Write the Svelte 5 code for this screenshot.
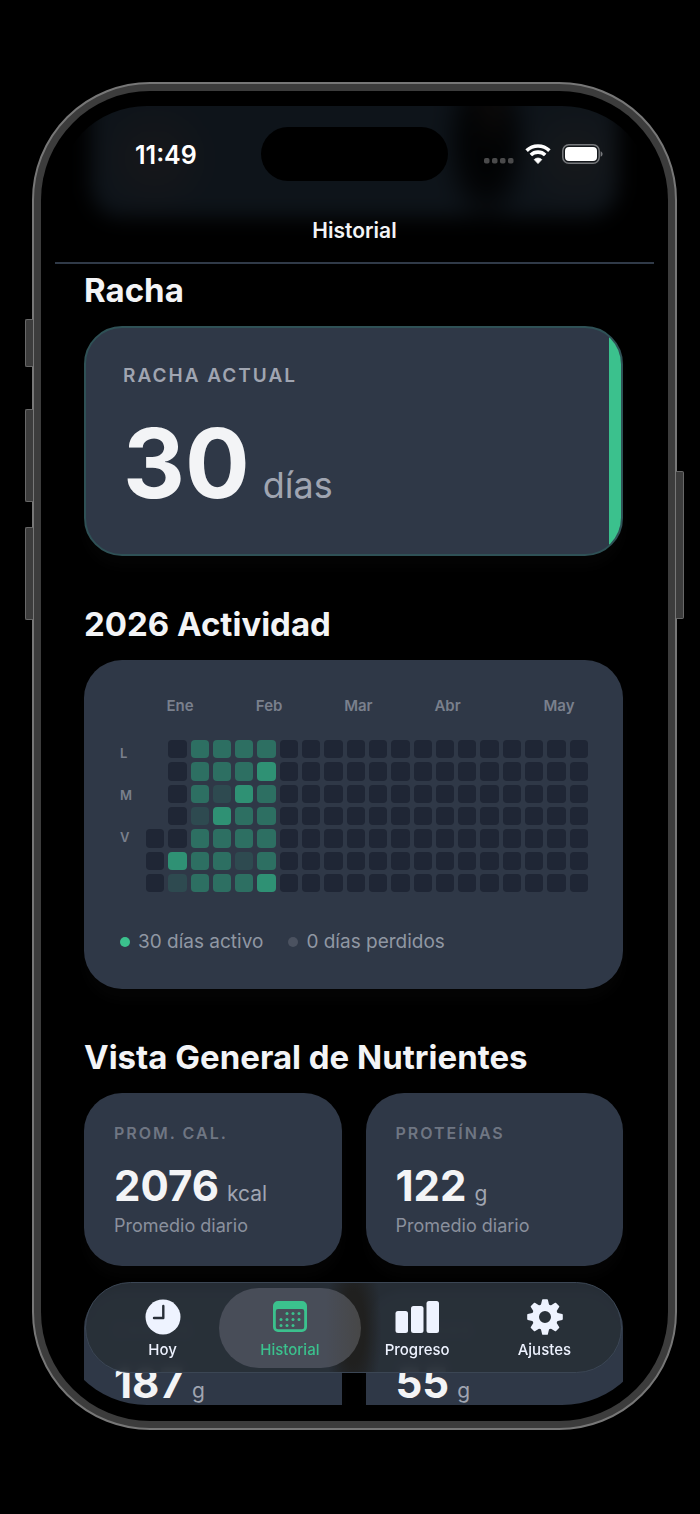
<script>
  const months = [
    { name: 'Ene', column: 1 },
    { name: 'Feb', column: 5 },
    { name: 'Mar', column: 9 },
    { name: 'Abr', column: 13 },
    { name: 'May', column: 18 }
  ];

  // One string per week, Monday to Sunday: - outside the year, 0 empty, 1 to 3 activity level
  const recorded = ['----000', '0000031', '2221222', '2213222', '2232212', '2322223'];
  const weeks = [...recorded, ...Array(14).fill('0000000')];
  const days = weeks.flatMap((week) => week.split(''));

  const nutrients = [
    { label: 'PROM. CAL.', value: '2076', unit: 'kcal' },
    { label: 'PROTEÍNAS', value: '122', unit: 'g' },
    { label: 'CARBOS', value: '187', unit: 'g' },
    { label: 'GRASAS', value: '55', unit: 'g' }
  ];

  const teeth = [0, 45, 90, 135, 180, 225, 270, 315];
  const dots = [
    [14, 12], [20, 12], [26, 12],
    [8, 18], [14, 18], [20, 18], [26, 18],
    [8, 24], [14, 24], [20, 24]
  ];

  const tabs = ['Hoy', 'Historial', 'Progreso', 'Ajustes'];
  let active = $state('Historial');
</script>

<div class="stage">
  <div class="phone">
    <span class="key key-action"></span>
    <span class="key key-up"></span>
    <span class="key key-down"></span>
    <span class="key key-power"></span>
    <div class="bezel">
      <div class="screen">
        <div class="status">
          <span class="time">11:49</span>
          <span class="island"></span>
          <span class="signals">
            <svg width="30" height="24" viewBox="0 0 30 24" fill="#4a4a4b" aria-hidden="true">
              <rect x="0" y="16" width="5.5" height="5.5" rx="1.8" />
              <rect x="8" y="16" width="5.5" height="5.5" rx="1.8" />
              <rect x="16" y="16" width="5.5" height="5.5" rx="1.8" />
              <rect x="24" y="16" width="5.5" height="5.5" rx="1.8" />
            </svg>
            <svg width="26" height="24" viewBox="0 0 26 24" aria-hidden="true">
              <g fill="none" stroke="#fff" stroke-width="3.6">
                <path d="M1.6 8.6a16.4 16.4 0 0 1 22.8 0" />
                <path d="M5.8 13a10.4 10.4 0 0 1 14.4 0" />
              </g>
              <path d="M13 21.6 9.2 17.6a5.4 5.4 0 0 1 7.6 0Z" fill="#fff" stroke="#fff" stroke-width=".8" stroke-linejoin="round" />
            </svg>
            <svg width="41" height="24" viewBox="0 0 41 24" aria-hidden="true">
              <rect x=".8" y="2.8" width="36.4" height="18.4" rx="6" fill="none" stroke="#77797c" stroke-width="1.5" />
              <rect x="3" y="5" width="32" height="14" rx="4" fill="#fff" />
              <path d="M38.6 9.2c2.6 1 2.6 4.600 0 5.600Z" fill="#77797c" />
            </svg>
          </span>
        </div>
        <header>Historial</header>

        <main>
          <section>
            <h2>Racha</h2>
            <div class="card streak">
              <p class="caption">RACHA ACTUAL</p>
              <p class="amount"><strong>30</strong><span>días</span></p>
            </div>
          </section>

          <section>
            <h2>2026 Actividad</h2>
            <div class="card activity">
              <div class="months">
                {#each months as month}
                  <span style="grid-column: {month.column} / span 3">{month.name}</span>
                {/each}
              </div>
              <div class="calendar">
                <div class="weekdays"><span>L</span><span>M</span><span>V</span></div>
                <div class="heatmap">
                  {#each days as level}
                    <i class="cell level{level === '-' ? 'none' : level}"></i>
                  {/each}
                </div>
              </div>
              <div class="legend">
                <span>30 días activo</span>
                <span class="missed">0 días perdidos</span>
              </div>
            </div>
          </section>

          <section>
            <h2>Vista General de Nutrientes</h2>
            <div class="nutrients">
              {#each nutrients as item}
                <div class="card nutrient">
                  <p class="label">{item.label}</p>
                  <p class="value"><strong>{item.value}</strong><span>{item.unit}</span></p>
                  <p class="note">Promedio diario</p>
                </div>
              {/each}
            </div>
          </section>
        </main>

        <nav>
          {#each tabs as tab}
            <button type="button" class:active={active === tab} onclick={() => (active = tab)}>
              {#if tab === 'Hoy'}
                <svg width="44" height="36" viewBox="0 0 44 36" aria-hidden="true">
                  <circle cx="22" cy="18" r="17.5" fill="currentColor" />
                  <path d="M22.300 7v12H13" fill="none" stroke="#282f38" stroke-width="2.4" stroke-linecap="round" stroke-linejoin="round" />
                </svg>
              {:else if tab === 'Historial'}
                <svg width="44" height="36" viewBox="0 0 44 36" aria-hidden="true">
                  <g transform="translate(5 2)">
                    <path fill="currentColor" fill-rule="evenodd" d="M5 0h24a5 5 0 0 1 5 5v21a5 5 0 0 1-5 5H5a5 5 0 0 1-5-5V5a5 5 0 0 1 5-5ZM5 8a2.200 2.200 0 0 0-2.200 2.200V26A2.200 2.200 0 0 0 5 28.200h24a2.200 2.200 0 0 0 2.200-2.200V10.200A2.200 2.200 0 0 0 29 8Z" />
                    {#each dots as [x, y]}
                      <circle cx={x} cy={y + 0.6} r="1.5" fill="currentColor" />
                    {/each}
                  </g>
                </svg>
              {:else if tab === 'Progreso'}
                <svg width="44" height="36" viewBox="0 0 44 36" fill="currentColor" aria-hidden="true">
                  <rect x="0.500" y="12" width="12.500" height="22" rx="2.500" />
                  <rect x="16" y="7" width="12.500" height="27" rx="2.500" />
                  <rect x="31.500" y="2" width="12.500" height="32" rx="2.500" />
                </svg>
              {:else}
                <svg width="44" height="36" viewBox="0 0 44 36" aria-hidden="true">
                  <circle cx="23" cy="18" r="9.5" fill="none" stroke="currentColor" stroke-width="7" />
                  {#each teeth as angle}
                    <path d="M19.600 6.500 20.900 1h4.200l1.300 5.500Z" transform="rotate({angle} 23 18)" fill="currentColor" stroke="currentColor" stroke-width="1.600" stroke-linejoin="round" />
                  {/each}
                </svg>
              {/if}
              {tab}
            </button>
          {/each}
        </nav>
      </div>
    </div>
  </div>
</div>

<style>
  :global(body) {
    background: #000;
  }

  .stage {
    box-sizing: border-box;
    min-height: 100vh;
    padding: 82px 23px 84px 32px;
    background: #000;
    color: #f3f4f6;
    font-family: Inter, 'Liberation Sans', sans-serif;
  }

  .stage * {
    box-sizing: border-box;
  }

  .phone {
    position: relative;
    display: flex;
    max-width: 720px;
    margin: 0 auto;
    aspect-ratio: 645 / 1348;
    padding: 7px;
    border: 2px solid #777;
    border-radius: 118px;
    background: #3c3c3c;
  }

  .bezel {
    display: flex;
    flex: 1;
    min-width: 0;
    padding: 15px 14px 16px;
    border-radius: 109px;
    background: #000;
  }

  .screen {
    position: relative;
    display: flex;
    flex: 1;
    flex-direction: column;
    min-width: 0;
    overflow: hidden;
    isolation: isolate;
    border-radius: 92px;
  }

  .key {
    position: absolute;
    left: -9px;
    width: 8px;
    border: 1px solid #686868;
    border-right: 0;
    border-radius: 2px 0 0 2px;
    background: #3c3c3c;
  }

  .key-action {
    top: 235px;
    height: 48px;
  }

  .key-up {
    top: 325px;
    height: 93px;
  }

  .key-down {
    top: 443px;
    height: 93px;
  }

  .key-power {
    top: 387px;
    right: -9px;
    left: auto;
    height: 148px;
    border: 1px solid #686868;
    border-left: 0;
    border-radius: 0 2px 2px 0;
  }

  .status {
    position: relative;
    display: grid;
    grid-template-columns: 1fr 187px 1fr;
    align-items: center;
    padding-top: 21px;
  }

  .status::before {
    position: absolute;
    z-index: -1;
    inset: -20px 36px -36px 36px;
    border-radius: 30px;
    background:
      radial-gradient(ellipse 20px 50px at 76% 12%, #0f0c0b, transparent),
      radial-gradient(ellipse 44px 90px at 75% 42%, #020304 50%, transparent),
      radial-gradient(circle at 12% 55%, #17171a, transparent 60px),
      radial-gradient(circle at 92% 55%, #17191c, transparent 60px),
      #0e141a;
    content: '';
    filter: blur(10px);
  }

  .time {
    padding: 2px 0 0 80px;
    color: #fff;
    font-size: 25px;
    font-weight: 600;
    line-height: 32px;
  }

  .island {
    height: 54px;
    border-radius: 27px;
    background: #000;
  }

  .signals {
    display: flex;
    justify-content: flex-end;
    gap: 11px;
    padding-right: 51px;
  }

  header {
    margin-top: 36px;
    padding-bottom: 17px;
    border-bottom: 2px solid #303a48;
    font-size: 21px;
    font-weight: 600;
    line-height: 28px;
    text-align: center;
  }

  main {
    display: flex;
    flex: 1;
    flex-direction: column;
    gap: 48px;
    min-height: 0;
    padding: 6px 31px 0 29px;
    overflow: hidden;
  }

  section {
    display: flex;
    flex-direction: column;
    gap: 16px;
  }

  h2,
  p {
    margin: 0;
  }

  h2 {
    font-size: 33px;
    font-weight: 700;
    line-height: 40px;
  }

  .card {
    border-radius: 38px;
    background: #2f3847;
    box-shadow: 0 12px 12px #040404;
  }

  .streak {
    position: relative;
    padding: 36px 37px 43px;
    overflow: hidden;
    border: 2px solid #2f5156;
  }

  .streak::after {
    position: absolute;
    inset: 0 0 0 auto;
    width: 12px;
    background: #3bc18d;
    content: '';
  }

  .caption {
    color: #a0a5b1;
    font-size: 19px;
    font-weight: 600;
    letter-spacing: 2px;
    line-height: 24px;
  }

  .amount {
    display: flex;
    align-items: baseline;
    gap: 13px;
    margin-top: 27px;
  }

  .amount strong {
    font-size: 96px;
    font-weight: 700;
    line-height: 96px;
  }

  .amount span {
    color: #a0a5b1;
    font-size: 36px;
    line-height: 40px;
  }

  .activity {
    padding: 36px 35px 34px 36px;
  }

  .months,
  .heatmap {
    display: grid;
    grid-template-columns: repeat(20, minmax(0, 1fr));
    gap: 4px;
  }

  .months {
    margin-left: 26px;
    color: #7a808d;
    font-size: 15px;
    font-weight: 600;
    line-height: 20px;
    text-align: center;
  }

  .months span {
    padding-left: 5px;
  }

  .calendar {
    display: flex;
    margin-top: 24px;
  }

  .weekdays {
    display: flex;
    flex: 0 0 26px;
    flex-direction: column;
    gap: 22px;
    padding-top: 3px;
    color: #7a808d;
    font-size: 13px;
    font-weight: 600;
    line-height: 20px;
  }

  .heatmap {
    flex: 1;
    grid-template-rows: repeat(7, auto);
    grid-auto-flow: column;
  }

  .cell {
    aspect-ratio: 1;
    border-radius: 4px;
    background: #1f2635;
  }

  .levelnone {
    background: none;
  }

  .level1 {
    background: #2e4a50;
  }

  .level2 {
    background: #2d6f62;
  }

  .level3 {
    background: #2f9174;
  }

  .legend {
    display: flex;
    gap: 25px;
    margin-top: 37px;
    color: #9097a3;
    font-size: 19px;
    line-height: 26px;
  }

  .legend span {
    display: flex;
    align-items: center;
    gap: 8px;
  }

  .legend span::before {
    width: 10px;
    height: 10px;
    border-radius: 50%;
    background: #3bc18d;
    content: '';
  }

  .legend .missed::before {
    background: #4b5260;
  }

  .nutrients {
    display: grid;
    grid-template-columns: 1fr 1fr;
    gap: 24px;
  }

  .nutrient {
    padding: 30px 30px 28px;
  }

  .label {
    color: #6f7683;
    font-size: 16px;
    font-weight: 600;
    letter-spacing: 2px;
    line-height: 20px;
  }

  .value {
    display: flex;
    align-items: baseline;
    gap: 8px;
    margin-top: 19px;
  }

  .value strong {
    font-size: 42px;
    font-weight: 700;
    line-height: 48px;
  }

  .value span {
    color: #a0a5b1;
    font-size: 21px;
    line-height: 24px;
  }

  .note {
    margin-top: 4px;
    color: #8a909d;
    font-size: 18px;
    line-height: 24px;
  }

  nav {
    position: absolute;
    right: 32px;
    bottom: 32px;
    left: 30px;
    display: grid;
    grid-template-columns: repeat(4, 1fr);
    padding: 5px 13px 4px;
    border: 1px solid #3b4654;
    border-radius: 46px;
    background:
      radial-gradient(ellipse 28px 90px at 50% 50%, #20201f 40%, transparent),
      rgb(40 47 56 / 95%);
    backdrop-filter: blur(4px);
  }

  button {
    display: flex;
    flex-direction: column;
    align-items: center;
    gap: 6px;
    margin: 0 -7px;
    padding: 11px 0 9px;
    border: 0;
    border-radius: 40px;
    background: none;
    color: #eef3ff;
    font: 500 15px/18px Inter, 'Liberation Sans', sans-serif;
  }

  .active {
    background: linear-gradient(90deg, #484d58 75%, #474747);
    color: #3bc18d;
  }
</style>
